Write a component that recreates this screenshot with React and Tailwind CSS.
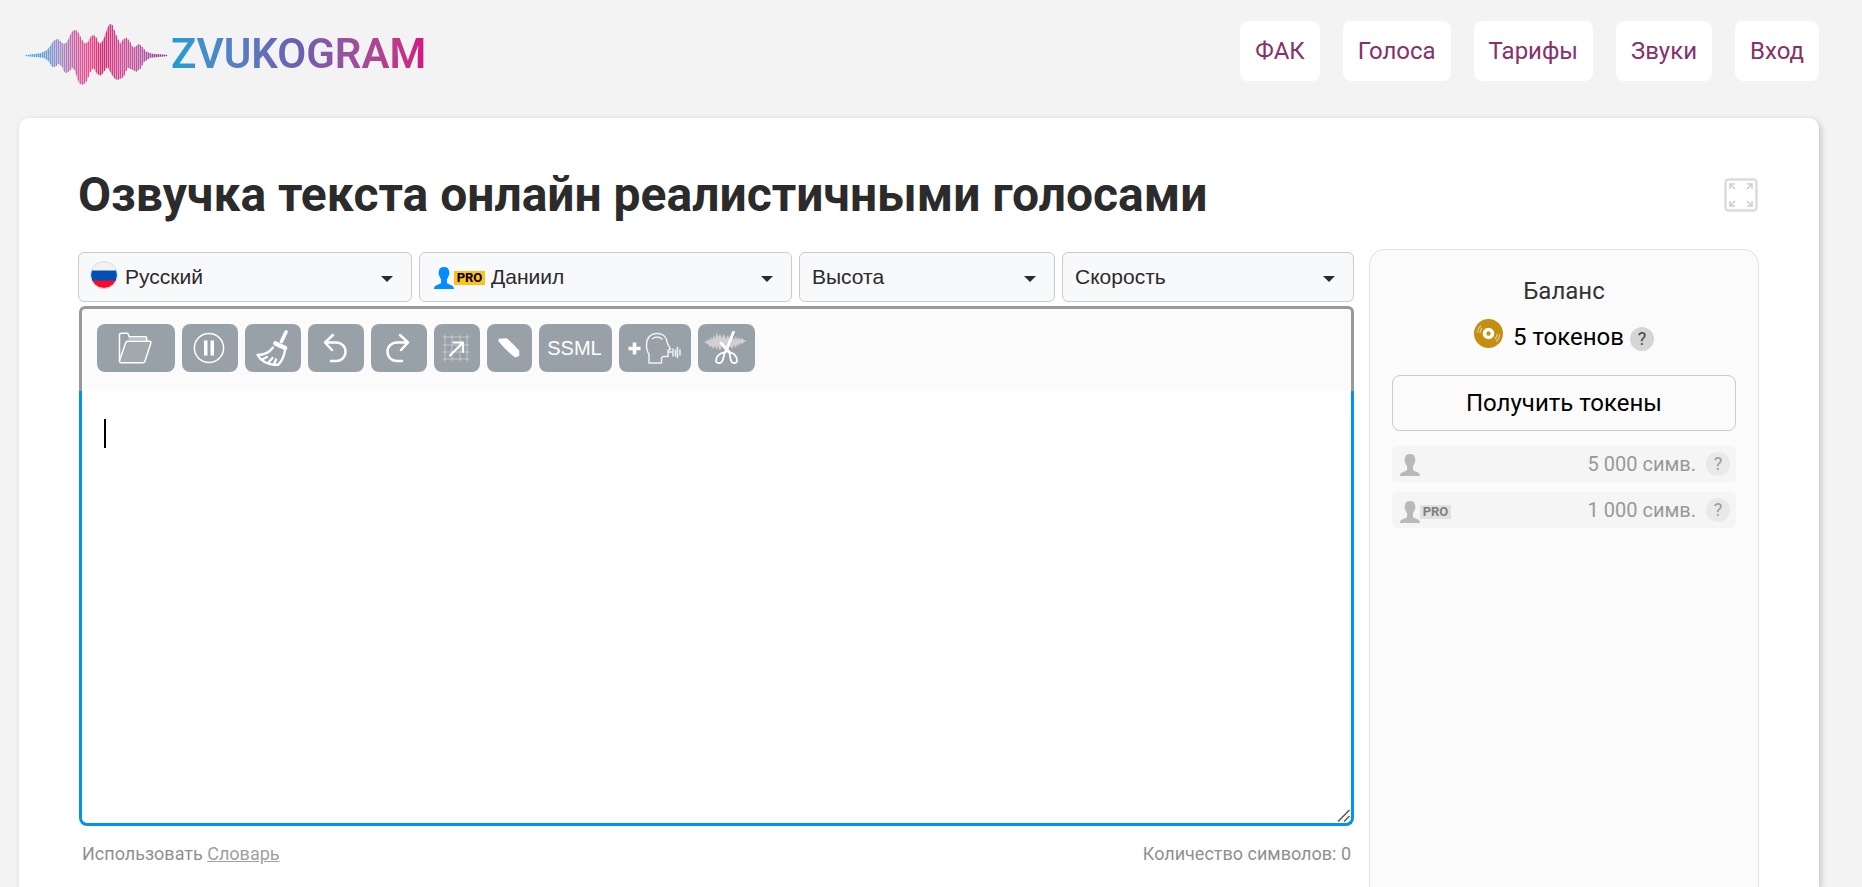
import { useState } from "react";

const navLinks = ["ФАК", "Голоса", "Тарифы", "Звуки", "Вход"];

// [x, y] points of the upper and lower edge of the logo wave
const waveTop = [
  [75, 163], [120, 157], [140, 148], [150, 135], [160, 120], [172, 113], [182, 122], [190, 130],
  [200, 124], [212, 98], [218, 89], [224, 87], [230, 89], [236, 98], [244, 115], [254, 129],
  [264, 122], [272, 106], [280, 102], [288, 110], [296, 128], [302, 127], [310, 115], [320, 86],
  [326, 71], [331, 69], [337, 73], [342, 88], [350, 108], [360, 128], [368, 116], [378, 110],
  [388, 120], [398, 140], [405, 138], [416, 128], [426, 138], [438, 152], [455, 158], [502, 162],
];
const waveBottom = [
  [75, 165], [130, 170], [145, 180], [154, 196], [160, 199], [167, 196], [175, 188], [186, 198],
  [192, 212], [198, 216], [208, 210], [216, 200], [224, 208], [232, 235], [238, 248], [247, 251],
  [255, 247], [262, 235], [268, 215], [280, 200], [290, 218], [302, 224], [312, 210], [322, 197],
  [334, 220], [344, 234], [354, 236], [370, 228], [382, 200], [394, 205], [408, 212], [420, 203],
  [432, 182], [450, 170], [502, 165],
];

function edgeAt(points, x) {
  const i = points.findIndex((p) => p[0] >= x);
  if (i <= 0) return points[0][1];
  const [x0, y0] = points[i - 1];
  const [x1, y1] = points[i];
  return y0 + ((y1 - y0) * (x - x0)) / (x1 - x0);
}

const waveBars = [];
for (let x = 78; x < 502; x += 6) {
  waveBars.push({ x, top: edgeAt(waveTop, x), bottom: edgeAt(waveBottom, x) });
}

function Logo() {
  const outline = [...waveTop, ...[...waveBottom].reverse()].map((p) => p.join(",")).join(" ");
  return (
    <a href="#" className="flex items-center gap-[3px] pt-0.5">
      <svg className="w-[144px] h-[62px]" viewBox="72 66 432 186" aria-hidden="true">
        <defs>
          <linearGradient id="wave" gradientUnits="userSpaceOnUse" x1="75" y1="0" x2="502" y2="0">
            <stop offset="0" stopColor="#2fb4e6" />
            <stop offset="0.13" stopColor="#5fa3d8" />
            <stop offset="0.25" stopColor="#a18cc4" />
            <stop offset="0.36" stopColor="#cf5fa4" />
            <stop offset="0.46" stopColor="#ee4b8c" />
            <stop offset="0.54" stopColor="#cf2a72" />
            <stop offset="0.68" stopColor="#d24d97" />
            <stop offset="0.82" stopColor="#b45aa3" />
            <stop offset="1" stopColor="#7c3d99" />
          </linearGradient>
        </defs>
        <polygon points={outline} fill="url(#wave)" opacity="0.5" />
        {waveBars.map((b) => (
          <rect key={b.x} x={b.x} y={b.top} width="3" height={b.bottom - b.top} fill="url(#wave)" />
        ))}
      </svg>
      <span className="text-[42px] leading-[48px] font-semibold bg-linear-to-r from-[#149fd4] via-[#6a5fb0] to-[#d3127f] bg-clip-text text-transparent">
        ZVUKOGRAM
      </span>
    </a>
  );
}

function Person() {
  return (
    <svg className="w-5 h-[22px]" viewBox="0 0 20 22" fill="currentColor" aria-hidden="true">
      <path d="M10 0c3.300 0 5.200 1.900 5.200 5 0 .8.300 1 .2 2-.1.900-.6 1.200-.8 2-.3 1.300-1 2.400-1.700 3.200v3c0 1 .7 1.500 2 2 2.300.8 5.100 1.600 5.100 4.800H0c0-3.200 2.800-4 5.100-4.800 1.300-.5 2-1 2-2v-3c-.7-.8-1.400-1.900-1.700-3.200-.2-.8-.7-1.100-.8-2-.1-1 .2-1.200.2-2 0-3.100 1.900-5 5.200-5z" />
    </svg>
  );
}

function RussianFlag() {
  return (
    <svg className="size-7" viewBox="0 0 28 28" aria-hidden="true">
      <clipPath id="flag">
        <circle cx="14" cy="14" r="13.300" />
      </clipPath>
      <g clipPath="url(#flag)">
        <rect width="28" height="10" fill="#f3f3f3" />
        <rect y="9.500" width="28" height="10.500" fill="#0050b5" />
        <rect y="19.500" width="28" height="9" fill="#fb0a2c" />
      </g>
      <circle cx="14" cy="14" r="13.400" fill="none" stroke="#d5d8dd" strokeWidth="1" />
    </svg>
  );
}

function Disc() {
  return (
    <svg className="size-[29px]" viewBox="0 0 29 29" aria-hidden="true">
      <circle cx="14.500" cy="14.500" r="14.500" fill="#c48e12" />
      <circle cx="14.500" cy="14.500" r="4" fill="none" stroke="#fff" strokeWidth="3.600" />
      <g fill="none" stroke="#e3c887" strokeWidth="1.300" strokeLinecap="round">
        <path d="M3.500 13c.2-2.500 1.200-4.500 3-6M6 13.500c.2-1.600.8-2.900 1.800-4" />
        <path d="M25.500 16c-.2 2.500-1.200 4.500-3 6M23 15.500c-.2 1.600-.8 2.900-1.800 4" />
      </g>
    </svg>
  );
}

function ProBadge({ className }) {
  return (
    <span className={"h-[14px] w-[31px] flex items-center justify-center text-[13px] leading-[14px] font-bold " + className}>
      PRO
    </span>
  );
}

function SelectBox({ label, icon, className, pad = "pl-3" }) {
  return (
    <div className={"relative " + className}>
      <select
        aria-label={label}
        className={"appearance-none w-full h-[50px] rounded-md border border-[#c9cbcd] bg-[#f8f9fb] text-[21px] text-[#2b2b2b] font-['Liberation_Sans',sans-serif] " + pad}
      >
        <option>{label}</option>
      </select>
      {icon}
      <svg className="absolute right-[19px] top-6 w-3 h-1.5 pointer-events-none" viewBox="0 0 12 6" aria-hidden="true">
        <path d="M0 0h12L6 6z" fill="#2b2b2b" />
      </svg>
    </div>
  );
}

const line = { fill: "none", stroke: "#fff", strokeLinecap: "round", strokeLinejoin: "round" };

const tools = [
  {
    name: "Открыть файл",
    width: "w-[78px]",
    icon: (
      <svg className="w-[34px] h-8" viewBox="0 0 34 32" {...line} strokeWidth="1.500">
        <path d="M1.500 29V3c0-1 .6-1.700 1.600-1.700H9c1 0 1.300.5 1.500 1.300l.6 2.200h16c1 0 1.600.6 1.600 1.600v3" />
        <path d="M1.500 28.500 7.600 11c.4-1.200 1-1.700 2.200-1.700h21.700c1.200 0 1.700.8 1.300 2L27 29c-.4 1.200-1 1.700-2.200 1.700H3c-1 0-1.500-.7-1.500-2.200z" fill="rgba(255,255,255,0.08)" />
        <path d="M11 7h17" strokeWidth="1" opacity="0.7" />
      </svg>
    ),
  },
  {
    name: "Пауза",
    width: "w-14",
    icon: (
      <svg className="size-8" viewBox="0 0 32 32" {...line} strokeWidth="1.500">
        <circle cx="16" cy="16" r="14.600" />
        <path d="M11 8.500h3.500v15H11zM17.500 8.500H21v15h-3.500z" fill="#fff" stroke="none" />
      </svg>
    ),
  },
  {
    name: "Очистить",
    width: "w-14",
    icon: (
      <svg className="w-8 h-9" viewBox="0 0 32 36" {...line} strokeWidth="2.300">
        <path d="m30 2-4.500 9.500" strokeWidth="3.600" />
        <path d="m19.500 13.500 9.500 4.500" strokeWidth="4.600" />
        <path d="M17 17.500C13 23 8 25 1.500 25 5 31 12 35 22 35c3.500-3.500 6-8.500 7-14.500" />
        <path d="m6 29.500 5-2.500M12 33l4.500-5M18 34.500l2-5" />
      </svg>
    ),
  },
  {
    name: "Отменить",
    width: "w-14",
    icon: (
      <svg className="w-6 h-[30px]" viewBox="0 0 24 30" {...line} strokeWidth="2.500">
        <path d="M10 2 2 9.500l7 7.500M2.500 9.500H13c5.500 0 9.500 4 9.500 9.300 0 5.200-4 9.200-9.500 9.200H8" />
      </svg>
    ),
  },
  {
    name: "Повторить",
    width: "w-14",
    icon: (
      <svg className="w-6 h-[30px]" viewBox="0 0 24 30" {...line} strokeWidth="2.500">
        <path d="m14 2 8 7.500-7 7.500M21.500 9.500H11c-5.500 0-9.500 4-9.500 9.300 0 5.200 4 9.200 9.500 9.200h5" />
      </svg>
    ),
  },
  {
    name: "Развернуть",
    width: "w-[46px]",
    icon: (
      <svg className="w-7 h-7" viewBox="0 0 28 28" {...line} strokeWidth="2.200">
        <path d="M3 1v26M10 1v26M18 1v26M25 1v26M1 3h26M1 11h26M1 18h26M1 25h26" strokeWidth="1" opacity="0.4" />
        <path d="M8 21.500 20.500 9M11.500 8.500H21V18" />
      </svg>
    ),
  },
  {
    name: "Ударение",
    width: "w-[45px]",
    icon: (
      <svg className="w-[22px] h-5" viewBox="0 0 22 20" fill="#fff" stroke="#fff" strokeWidth="1.500" strokeLinejoin="round">
        <path d="M1.200 1.500 8.500 1c4 3.500 8 7.500 12 12v4.500L17 18.500C11.500 14 5.500 8.500 1.200 3z" />
      </svg>
    ),
  },
  { name: "SSML", width: "w-[73px]", icon: "SSML" },
  {
    name: "Добавить голос",
    width: "w-[72px]",
    icon: (
      <svg className="w-[54px] h-8" viewBox="0 0 54 32" {...line} strokeWidth="1.500">
        <path d="M7.500 10.500v12M1.500 16.500h12" strokeWidth="3.600" strokeLinecap="butt" />
        <g opacity="0.85">
          <path d="M22 31V22c-2-2.500-2.500-5.500-2.500-9C19.500 6 23.500 1.500 30 1.500S40 6 40.500 11.500l3 5.500-2.500 1.500v6h-5l-1.500 1.500V31z" />
          <path d="M25.500 6.500c3-2 6.500-2 9.500.5" />
          <path d="M42 20h2.500M46 17v7M48.500 18v6M50.500 15.500v10M53 18v5" />
        </g>
      </svg>
    ),
  },
  {
    name: "Обрезать",
    width: "w-[57px]",
    icon: (
      <svg className="w-11 h-[34px]" viewBox="0 0 44 34" {...line} strokeWidth="1.800">
        <path
          d="M0 11l3-1 1-2 1 2 2-4 1 3 2-5 1 4 2-7 1 5 2-3 2 4 2-4 2 5 2-4 2 5 2-5 2 5 2-4 1 4 2-3 1 3 2-2 2 2 3 1-3 1-2 2-2-1-1 3-2-2-1 4-2-3-2 4-2-3-2 4-2-3-2 3-2-4-2 5-2-5-1 4-2-4-2 3-1-3-2 1-1-2z"
          fill="#e8e2e2"
          stroke="none"
          opacity="0.7"
        />
        <path d="m29.500 1-8 20M17 12l9 10" strokeWidth="2.800" />
        <path d="M20.500 21.500c-4 0-8.500 3.500-8.500 8 0 3 4.500 3.500 6 1 1.500-2.500 2-6 2.500-9zM25.500 21.500c4 0 7.500 3.500 7.500 8 0 3-4 3.500-5.500 1-1.500-2.500-1.500-6-2-9z" />
      </svg>
    ),
  },
];

function Editor() {
  const [text, setText] = useState("");

  return (
    <div className="pl-px pt-1">
      <div className="flex gap-[7px] h-[85px] px-[15px] pt-[15px] border-3 border-b-0 border-[#989a9a] rounded-t-md bg-[#fbfbfb]">
        {tools.map((tool) => (
          <button
            key={tool.name}
            aria-label={tool.name}
            className={"h-12 shrink-0 pr-0.5 rounded-lg bg-[#99a1a8] text-white text-xl font-['Liberation_Sans',sans-serif] flex items-center justify-center " + tool.width}
          >
            {tool.icon}
          </button>
        ))}
      </div>
      <div className="relative">
        <textarea
          aria-label="Текст"
          value={text}
          onChange={(e) => setText(e.target.value)}
          className="block w-full h-[435px] px-[22px] py-6 text-2xl leading-9 border-3 border-t-0 border-[#0592ec] rounded-b-lg bg-white outline-none resize-none caret-transparent"
        />
        {/* text cursor */}
        {text === "" && <span className="absolute left-[25px] top-7 w-0.5 h-[29px] bg-black pointer-events-none" />}
        {/* resize grip */}
        <svg className="absolute right-1 bottom-1 size-[13px] pointer-events-none" viewBox="0 0 13 13" stroke="#555" strokeWidth="1.500" aria-hidden="true">
          <path d="M1 12.500 12.500 1M7 12.500 12.500 7" />
        </svg>
      </div>
      <div className="flex justify-between px-[3px] pt-4 text-lg leading-6 text-[#8f8f8f]">
        <p>
          Использовать <a href="#" className="underline text-[#a0a0a0]">Словарь</a>
        </p>
        <p>Количество символов: {text.length}</p>
      </div>
    </div>
  );
}

function Hint({ className }) {
  return (
    <button aria-label="Подсказка" className={"size-6 rounded-full text-lg leading-6 " + className}>
      ?
    </button>
  );
}

function Balance() {
  return (
    <aside className="w-[390px] shrink-0 border border-b-0 border-[#e2e3e4] rounded-t-2xl bg-[#fbfbfb] px-[22px] pt-[23px]">
      <h2 className="text-2xl leading-9 text-center text-[#333]">Баланс</h2>
      <div className="flex items-center justify-center mt-2 h-10 text-2xl text-black">
        <span className="pb-2"><Disc /></span>
        <span className="ml-2.5">5 токенов</span>
        <Hint className="ml-1.5 mt-1 bg-[#d5d5d5] text-[#444]" />
      </div>
      <button className="w-full h-14 mt-[18px] rounded-lg border border-[#c9cbcc] text-2xl text-black">Получить токены</button>
      <div className="flex flex-col gap-2.5 mt-[15px]">
        <div className="flex items-center h-9 pl-2 pr-1.5 rounded-md bg-[#f5f5f5] text-xl text-[#999]">
          <span className="flex items-center pt-0.5 text-[#b9b9b9]">
            <Person />
          </span>
          <span className="ml-auto mr-2.5">5 000 симв.</span>
          <Hint className="bg-[#e9e9e9]" />
        </div>
        <div className="flex items-center h-9 pl-2 pr-1.5 rounded-md bg-[#f5f5f5] text-xl text-[#999]">
          <span className="flex items-center pt-1 text-[#b9b9b9]">
            <Person />
            <ProBadge className="bg-[#e1e1e1] text-[#808080]" />
          </span>
          <span className="ml-auto mr-2.5">1 000 симв.</span>
          <Hint className="bg-[#e9e9e9]" />
        </div>
      </div>
    </aside>
  );
}

export default function App() {
  return (
    <div className="flex flex-col h-screen overflow-hidden bg-[#f3f3f3] pl-[19px] pr-[43px] font-['Roboto',sans-serif] text-[#2b2b2b]">
      <header className="flex items-start justify-between h-[118px] shrink-0 pt-[21px] pl-[5px]">
        <Logo />
        <nav className="flex gap-[23px]">
          {navLinks.map((link) => (
            <a key={link} href="#" className="h-[60px] px-[15px] rounded-lg bg-white text-2xl leading-[60px] text-[#86316b]">
              {link}
            </a>
          ))}
        </nav>
      </header>

      <main className="flex-1 flex flex-col pl-[59px] pr-[60px] pt-[46px] bg-white rounded-t-[10px] shadow-[2px_2px_6px_rgba(0,0,0,0.2)]">
        <div className="flex items-center justify-between pr-px">
          <h1 className="text-5xl leading-[62px] font-bold">Озвучка текста онлайн реалистичными голосами</h1>
          <button aria-label="На весь экран">
            <svg className="size-[34px]" viewBox="0 0 34 34" fill="none" stroke="#dcdcdc" strokeWidth="2.500">
              <rect x="1.500" y="1.500" width="31" height="31" rx="3" />
              <path d="M6 11V6h5M6 6l5 5M23 6h5v5M28 6l-5 5M6 23v5h5M6 28l5-5M28 23v5h-5M28 28l-5-5" strokeWidth="1.600" stroke="#cfcfcf" />
            </svg>
          </button>
        </div>

        <div className="flex-1 flex gap-[15px] mt-[23px]">
          <div className="flex-1 pt-[3px]">
            <div className="flex gap-[7px]">
              <SelectBox
                label="Русский"
                className="w-[334px]"
                pad="pl-[46px]"
                icon={<span className="absolute left-3 top-[9px] pointer-events-none"><RussianFlag /></span>}
              />
              <SelectBox
                label="Даниил"
                className="w-[373px]"
                pad="pl-[71px]"
                icon={
                  <span className="absolute left-[15px] top-[15px] flex items-center pointer-events-none text-[#008dfd]">
                    <Person />
                    <ProBadge className="bg-[#fec11b] text-black" />
                  </span>
                }
              />
              <SelectBox label="Высота" className="w-64" />
              <SelectBox label="Скорость" className="flex-1" />
            </div>
            <Editor />
          </div>
          <Balance />
        </div>
      </main>
    </div>
  );
}
